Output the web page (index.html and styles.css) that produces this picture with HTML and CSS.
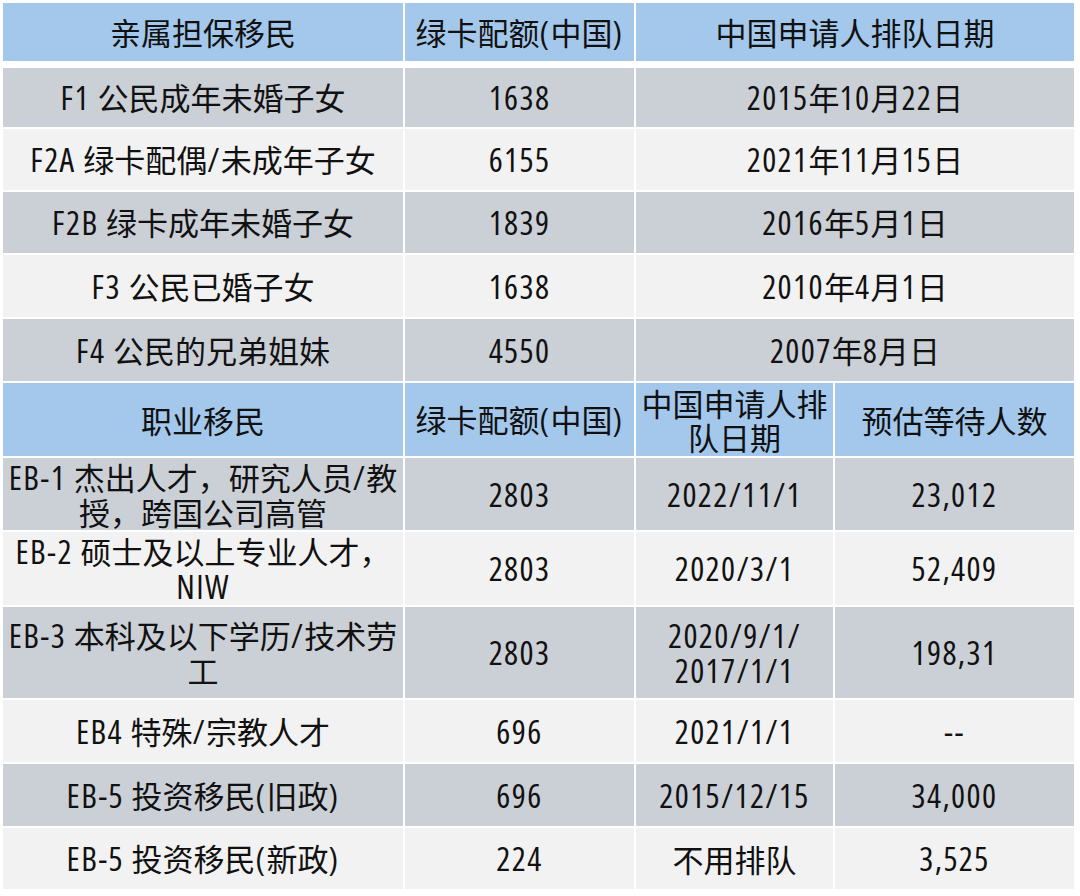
FILE: index.html
```html
<!DOCTYPE html>
<html lang="zh-CN">
<head>
<meta charset="utf-8">
<title>移民排期表</title>
<link rel="stylesheet" href="styles.css">
</head>
<body>
<div class="sheet">
  <div class="row top blue h58 first">
    <div class="cell"><span class="t">亲属担保移民</span></div>
    <div class="cell"><span class="t">绿卡配额<span class="n">(</span>中国<span class="n">)</span></span></div>
    <div class="cell"><span class="t">中国申请人排队日期</span></div>
  </div>
  <div class="row top gray h59">
    <div class="cell"><span class="t"><span class="n">F1 </span>公民成年未婚子女</span></div>
    <div class="cell"><span class="t"><span class="n">1638</span></span></div>
    <div class="cell"><span class="t"><span class="n">2015</span>年<span class="n">10</span>月<span class="n">22</span>日</span></div>
  </div>
  <div class="row top light">
    <div class="cell"><span class="t"><span class="n">F2A </span>绿卡配偶<span class="n">/</span>未成年子女</span></div>
    <div class="cell"><span class="t"><span class="n">6155</span></span></div>
    <div class="cell"><span class="t"><span class="n">2021</span>年<span class="n">11</span>月<span class="n">15</span>日</span></div>
  </div>
  <div class="row top gray">
    <div class="cell"><span class="t"><span class="n">F2B </span>绿卡成年未婚子女</span></div>
    <div class="cell"><span class="t"><span class="n">1839</span></span></div>
    <div class="cell"><span class="t"><span class="n">2016</span>年<span class="n">5</span>月<span class="n">1</span>日</span></div>
  </div>
  <div class="row top light h62">
    <div class="cell"><span class="t"><span class="n">F3 </span>公民已婚子女</span></div>
    <div class="cell"><span class="t"><span class="n">1638</span></span></div>
    <div class="cell"><span class="t"><span class="n">2010</span>年<span class="n">4</span>月<span class="n">1</span>日</span></div>
  </div>
  <div class="row top gray h62">
    <div class="cell"><span class="t"><span class="n">F4 </span>公民的兄弟姐妹</span></div>
    <div class="cell"><span class="t"><span class="n">4550</span></span></div>
    <div class="cell"><span class="t"><span class="n">2007</span>年<span class="n">8</span>月日</span></div>
  </div>

  <div class="row bottom blue h73">
    <div class="cell"><span class="t">职业移民</span></div>
    <div class="cell"><span class="t">绿卡配额<span class="n">(</span>中国<span class="n">)</span></span></div>
    <div class="cell"><span class="t">中国申请人排<br>队日期</span></div>
    <div class="cell"><span class="t">预估等待人数</span></div>
  </div>
  <div class="row bottom gray h72">
    <div class="cell"><span class="t"><span class="n">EB-1 </span>杰出人才，研究人员<span class="n">/</span>教<br>授，跨国公司高管</span></div>
    <div class="cell"><span class="t"><span class="n">2803</span></span></div>
    <div class="cell"><span class="t"><span class="n">2022/11/1</span></span></div>
    <div class="cell"><span class="t"><span class="n">23,012</span></span></div>
  </div>
  <div class="row bottom light h73">
    <div class="cell"><span class="t"><span class="n">EB-2 </span>硕士及以上专业人才，<br><span class="n">NIW</span></span></div>
    <div class="cell"><span class="t"><span class="n">2803</span></span></div>
    <div class="cell"><span class="t"><span class="n">2020/3/1</span></span></div>
    <div class="cell"><span class="t"><span class="n">52,409</span></span></div>
  </div>
  <div class="row bottom gray h91">
    <div class="cell"><span class="t"><span class="n">EB-3 </span>本科及以下学历<span class="n">/</span>技术劳<br>工</span></div>
    <div class="cell"><span class="t"><span class="n">2803</span></span></div>
    <div class="cell"><span class="t"><span class="n">2020/9/1/<br>2017/1/1</span></span></div>
    <div class="cell"><span class="t"><span class="n">198,31</span></span></div>
  </div>
  <div class="row bottom light h62">
    <div class="cell"><span class="t"><span class="n">EB4 </span>特殊<span class="n">/</span>宗教人才</span></div>
    <div class="cell"><span class="t"><span class="n">696</span></span></div>
    <div class="cell"><span class="t"><span class="n">2021/1/1</span></span></div>
    <div class="cell"><span class="t"><span class="n">--</span></span></div>
  </div>
  <div class="row bottom gray h62">
    <div class="cell"><span class="t"><span class="n">EB-5 </span>投资移民<span class="n">(</span>旧政<span class="n">)</span></span></div>
    <div class="cell"><span class="t"><span class="n">696</span></span></div>
    <div class="cell"><span class="t"><span class="n">2015/12/15</span></span></div>
    <div class="cell"><span class="t"><span class="n">34,000</span></span></div>
  </div>
  <div class="row bottom light">
    <div class="cell"><span class="t"><span class="n">EB-5 </span>投资移民<span class="n">(</span>新政<span class="n">)</span></span></div>
    <div class="cell"><span class="t"><span class="n">224</span></span></div>
    <div class="cell"><span class="t">不用排队</span></div>
    <div class="cell"><span class="t"><span class="n">3,525</span></span></div>
  </div>
</div>
</body>
</html>
```

FILE: styles.css
```css
html, body {
  margin: 0;
  padding: 0;
  background: #ffffff;
}

.sheet {
  display: flex;
  flex-direction: column;
  gap: 2px;
  padding: 3px 0 0 3px;
  width: 1071px;
}

.row {
  display: grid;
  column-gap: 2px;
  height: 61px;
}

.row.top {
  grid-template-columns: 400px 229px 438px;
}

.row.bottom {
  grid-template-columns: 400px 229px 197px 239px;
}

.row.first { margin-bottom: 5px; }

.h58 { height: 58px; }
.h59 { height: 59px; }
.h62 { height: 62px; }
.h72 { height: 72px; }
.h73 { height: 73px; }
.h91 { height: 91px; }

.cell {
  display: flex;
  align-items: center;
  justify-content: center;
  overflow: hidden;
  font-family: "Noto Sans CJK SC", "Noto Sans", sans-serif;
  font-size: 31px;
  line-height: 34px;
  color: #111111;
}

.t {
  display: block;
  text-align: center;
  white-space: nowrap;
}

.blue .cell { background: #a4c8ec; }
.gray .cell { background: #cbcfd6; }
.light .cell { background: #f2f2f2; }

.n {
  font-family: "Open Sans", "Noto Sans", sans-serif;
  font-stretch: 75%;
  font-weight: 400;
  font-size: 33px;
  letter-spacing: 1.4px;
  line-height: 34px;
}
```
